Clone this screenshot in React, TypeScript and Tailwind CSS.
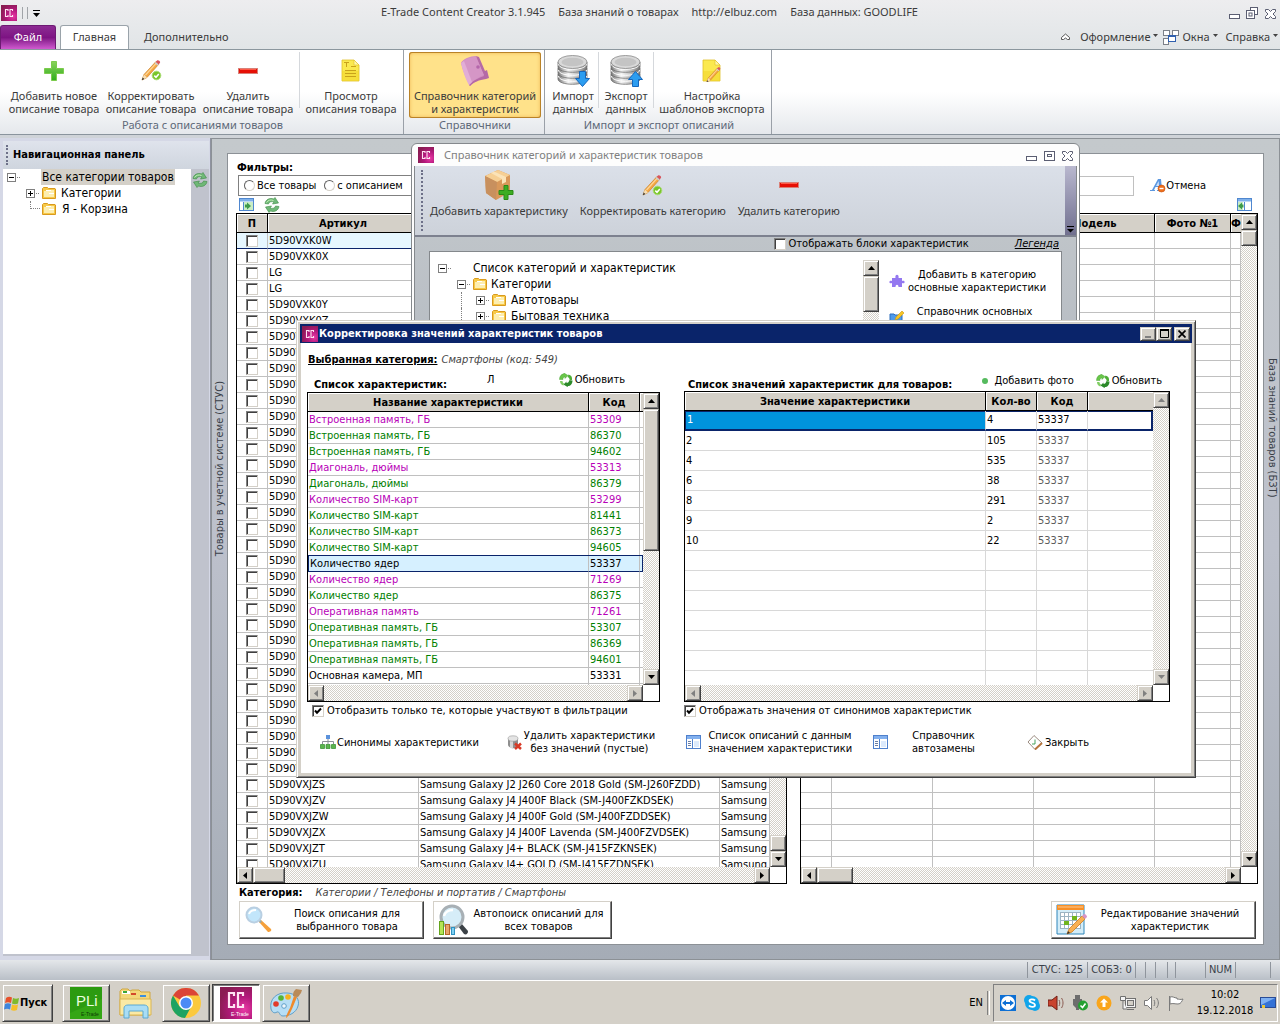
import type { ReactNode } from "react";

const raised =
  "border border-t-[#d4d0c8] border-l-[#d4d0c8] border-b-[#404040] border-r-[#404040] bg-[#d4d0c8] shadow-[inset_1px_1px_0_#fff,inset_-1px_-1px_0_#808080]";
const checker =
  "bg-[repeating-conic-gradient(#d4d0c8_0_25%,#ffffff_0_50%)] bg-[length:2px_2px]";
const segoe = "[font-family:'Noto_Sans','Open_Sans',sans-serif]";

/* ---------- icons ---------- */

function Folder() {
  return (
    <svg width="14" height="12" viewBox="0 0 14 12" className="shrink-0">
      <path d="M.5 11.5V1.5L1.5.5h4l1 1h6.5l.5.5v9.500z" fill="#f7c948" stroke="#d99a1e" />
      <path d="M2 10V4h4l1-1h5v7z" fill="#fdeeb0" />
      <path d="M4 3.500h5M7 6.500h5" stroke="#fff" />
    </svg>
  );
}

function Plus() {
  return (
    <svg width="20" height="20" viewBox="0 0 20 20">
      <defs>
        <linearGradient id="plusG" x2="0" y2="1">
          <stop offset="0" stopColor="#8ad25c" />
          <stop offset="1" stopColor="#2fae1c" />
        </linearGradient>
      </defs>
      <path d="M7.500.5h5v7h7v5h-7v7h-5v-7h-7v-5h7z" fill="url(#plusG)" stroke="#7ccb4d" />
    </svg>
  );
}

function Minus() {
  return (
    <svg width="20" height="6" viewBox="0 0 20 6">
      <rect x=".5" y=".5" width="19" height="5" fill="#e60f05" stroke="#d98078" />
      <path d="M2 1.500h16" stroke="#ff5a48" />
    </svg>
  );
}

function PencilShape() {
  return (
    <g>
      <path d="M1 20l2-5.500L15 1.500l3 2.500L6 17.500z" fill="#f5a742" stroke="#c9812b" strokeWidth=".7" />
      <path d="M4 14.500L15 2.500l1 .8L5 15.500z" fill="#fdd596" />
      <path d="M1 20l2-5.500 3 3z" fill="#f6dfb5" />
      <path d="M.8 20.200l.9-2.600 1.600 1.500z" fill="#333" />
      <path d="M14.700 2L16 .6c.7-.6 1.500-.4 2.200.2s1.300 1.400.7 2.200L17.600 4.500z" fill="#d9545c" />
      <path d="M13.700 3.100l1-1.100 3 2.500-1 1.200z" fill="#c9ced6" />
    </g>
  );
}

function Pencil() {
  return (
    <svg width="21" height="21" viewBox="0 0 21 21">
      <PencilShape />
      <circle cx="15.500" cy="15.500" r="4.300" fill="#79c52a" stroke="#a9dc74" />
      <path d="M13.300 15.600l1.700 1.700 2.800-3.300" fill="none" stroke="#fff" strokeWidth="1.500" />
    </svg>
  );
}

function Note({ pencil = false }: { pencil?: boolean }) {
  return (
    <svg width="20" height="23" viewBox="0 0 20 23">
      <path d="M1 1h12l5 5v16H1z" fill="#fbe94f" stroke="#e0c02a" strokeWidth=".8" />
      <path d="M1 12h17v10H1z" fill="#f2d428" opacity=".5" />
      <path d="M13 1v5h5z" fill="#fff7a8" stroke="#e0c02a" strokeWidth=".6" />
      {pencil ? (
        <g transform="translate(4 8) scale(.75)">
          <PencilShape />
        </g>
      ) : (
        <path d="M3 3.500h5M5.500 3.500V8M10 7.500h5M4 11.500h11M4 14.500h11M4 17.500h11" stroke="#c9a21a" fill="none" />
      )}
    </svg>
  );
}

function Book() {
  return (
    <svg width="30" height="32" viewBox="0 0 30 32">
      <path d="M1 8C3 4 10 1 16 1l8 15 2 6C19 24 14 27 10 31 7 25 3 17 1 8z" fill="#d08cc0" />
      <path d="M16 1l3 1 6 14 2-1 2 8-3 1C19 25 14 27 10 31l-1-1C13 25 19 23 24 21z" fill="#b56aa6" />
      <path d="M16 2l8 18c-5 2-9 4-14 9L1.500 8C4 4 11 2 16 2z" fill="#d596c6" />
      <path d="M1 8l3-2 8 21-3 3C6 25 3 17 1 8z" fill="#e2aed7" />
      <circle cx="18" cy="12" r="1.800" fill="#b566ab" />
    </svg>
  );
}

function Db({ up = false }: { up?: boolean }) {
  return (
    <svg width="33" height="33" viewBox="0 0 33 33">
      <defs>
        <linearGradient id="dbG">
          <stop offset="0" stopColor="#777" />
          <stop offset=".35" stopColor="#f4f4f4" />
          <stop offset=".7" stopColor="#bbb" />
          <stop offset="1" stopColor="#777" />
        </linearGradient>
      </defs>
      {[20, 14, 8].map((y) => (
        <g key={y}>
          <path d={`M1 ${y}v5c0 7 29 7 29 0v-5z`} fill="url(#dbG)" stroke="#6d6d6d" strokeWidth=".8" />
          <path d={`M1.500 ${y + 2}c0 7 28 7 28 0`} fill="none" stroke="#fff" />
        </g>
      ))}
      <ellipse cx="15.500" cy="8" rx="14.500" ry="6.500" fill="#d9d9d9" stroke="#888" strokeWidth=".8" />
      <ellipse cx="15.500" cy="8" rx="11" ry="4.300" fill="#c4c4c4" />
      {up ? (
        <path d="M25.500 17.500l7 8h-4v7h-6v-7h-4z" fill="#2c9df0" stroke="#1467bd" />
      ) : (
        <path d="M25.500 32.500l-7-8h4v-7h6v7h4z" fill="#2c9df0" stroke="#1467bd" />
      )}
    </svg>
  );
}

function Box() {
  return (
    <svg width="30" height="32" viewBox="0 0 30 32">
      <path d="M1 7L14 1l12 5v17L12 31 2 24z" fill="#d9985a" />
      <path d="M1 7L14 1l12 5-13 7z" fill="#f6cf94" />
      <path d="M1 7l12 6-1 18L2 24z" fill="#c8905e" />
      <path d="M7 4l3-1.500L22 8v5l-4 2v-5z" fill="#fbe3b8" />
      <path d="M20 16.500h4v5h5v4h-5v5h-4v-5h-5v-4h5z" fill="#3cad22" stroke="#2a8a17" />
    </svg>
  );
}

function Refresh() {
  return (
    <svg width="16" height="16" viewBox="0 0 16 16" className="shrink-0">
      <path d="M1 6.500C1.500 2.500 6 .5 9.500 2L11 .5 14.500 6 8.500 7 10 5C7.500 4 4.500 5 4.500 7z" fill="#6fb877" stroke="#3c8a45" strokeWidth=".6" />
      <path d="M15 9.500c-.5 4-5 6-8.500 4.500L5 15.500 1.500 10l6-1L6 11c2.500 1 5.500 0 5.500-2z" fill="#6fb877" stroke="#3c8a45" strokeWidth=".6" />
      <path d="M2.500 5.500C4 3 7 2.500 9.500 3.500" stroke="#c2efb4" fill="none" />
    </svg>
  );
}

function RefreshSmall() {
  return (
    <svg width="14" height="14" viewBox="0 0 14 14" className="shrink-0">
      <path d="M.5 6.500C.5 3 2.500 1 4.500 1L5 0l4 2.500L6 5.500V4C4.500 4 3.800 5 4 6.500z" fill="#69c64a" stroke="#3f9c2c" strokeWidth=".4" />
      <path d="M9.500 1.500c2.500.5 4 2.500 3.500 5.500l-2.500 1C11 6 10 4.500 8.500 4z" fill="#4fae38" />
      <path d="M13.500 7.500c0 3.500-2 5.500-4.500 5.500l-.5 1-4-2.500 3-3V10c1.500 0 2.700-1 2.500-2.500z" fill="#2c8a2a" />
      <path d="M1 8c0 2.500 1.500 4 3.500 4.500l.5-2C4 10 3.500 9 3.500 8z" fill="#7fce62" />
    </svg>
  );
}

function CC({ size = 16, label = false }: { size?: number; label?: boolean }) {
  return (
    <svg width={size} height={size} viewBox="0 0 32 32" className="shrink-0">
      <defs>
        <radialGradient id="ccG" cx=".75" cy=".7" r=".8">
          <stop offset="0" stopColor="#e83aa4" />
          <stop offset=".5" stopColor="#b3187c" />
          <stop offset="1" stopColor="#8a1c52" />
        </radialGradient>
      </defs>
      <rect width="32" height="32" fill="url(#ccG)" />
      <g transform={label ? "translate(0 -3)" : undefined} fill="none" stroke="#ffe3f2" strokeWidth="2.200">
        <path d="M14 12V9H9v14h5v-3" />
        <path d="M23 12V9h-5v14h5v-3" />
      </g>
      {label && (
        <text x="11" y="29" fontSize="5" fill="#fff" fontFamily="Liberation Sans">
          E-Trade
        </text>
      )}
    </svg>
  );
}

function PanelIcon({ flip = false }: { flip?: boolean }) {
  return (
    <svg width="15" height="13" viewBox="0 0 15 13" className="shrink-0">
      <rect x=".5" y=".5" width="14" height="12" fill="#fff" stroke="#4f87cf" />
      <rect x="1" y="1" width="13" height="2.500" fill="#7fb0ea" />
      {flip ? (
        <g>
          <rect x="1" y="4" width="5" height="8" fill="#c9edc4" />
          <path d="M7.500 4v8" stroke="#4f87cf" />
          <path d="M1 8l4-3.500v2h1.500v3H5v2z" fill="#3e9b4b" />
        </g>
      ) : (
        <g>
          <rect x="5" y="4" width="9" height="8" fill="#c9edc4" />
          <path d="M4.500 4v8" stroke="#4f87cf" />
          <path d="M12 8L8 4.500v2H6v3h2v2z" fill="#3e9b4b" />
        </g>
      )}
    </svg>
  );
}

function ListIcon() {
  return (
    <svg width="16" height="14" viewBox="0 0 16 14" className="shrink-0">
      <rect x=".5" y=".5" width="14" height="13" fill="#fff" stroke="#4f80cc" />
      <rect x="1" y="1" width="13" height="3" fill="#82b0ee" />
      <path d="M6.500 4v9" stroke="#4f80cc" />
      <path d="M2 6.500h3M2 8.500h3M2 10.500h3" stroke="#6b7fa5" />
      <rect x="8" y="6" width="5" height="6" fill="#dceafc" />
    </svg>
  );
}

function WinButtons({ restore = false }: { restore?: boolean }) {
  return (
    <svg width="48" height="14" viewBox="0 0 48 14" fill="#fff" stroke="#5b5e72">
      <rect x="1.500" y="8.500" width="10" height="4" />
      {restore ? (
        <g>
          <rect x="22.500" y="1.500" width="7" height="7" />
          <rect x="18.500" y="4.500" width="8" height="8" />
          <rect x="21" y="7" width="3" height="3" />
        </g>
      ) : (
        <g>
          <rect x="19.500" y="3.500" width="10" height="9" />
          <rect x="22.500" y="6.500" width="4" height="2" />
        </g>
      )}
      <path d="M37.500 3.500h3l2 2 2-2h3v2l-2.500 2.500 2.500 2.500v2h-3l-2-2-2 2h-3v-2L40 8l-2.500-2.500z" />
    </svg>
  );
}

/* ---------- small controls ---------- */

type Dir = "up" | "down" | "left" | "right";
const arrowPath: Record<Dir, string> = {
  up: "M0 4h7L3.500 0z",
  down: "M0 0h7L3.500 4z",
  left: "M4 0v7L0 3.500z",
  right: "M0 0v7l4-3.500z",
};

function ScrollButton({ dir, off }: { dir: Dir; off?: boolean }) {
  const flat = dir === "up" || dir === "down";
  return (
    <button aria-label={dir} className={`flex size-4 shrink-0 items-center justify-center ${raised}`}>
      <svg width={flat ? 7 : 4} height={flat ? 4 : 7}>
        <path d={arrowPath[dir]} fill={off ? "#808080" : "#000"} />
      </svg>
    </button>
  );
}

function VScroll({ children, off }: { children?: ReactNode; off?: boolean }) {
  return (
    <div className={`flex w-4 shrink-0 flex-col ${checker}`}>
      <ScrollButton dir="up" off={off} />
      <div className="flex min-h-0 flex-1 flex-col">{children}</div>
      <ScrollButton dir="down" off={off} />
    </div>
  );
}

function HScroll({ thumb, off }: { thumb?: string; off?: boolean }) {
  return (
    <div className="flex h-4 shrink-0 bg-white pr-4">
      <div className={`flex flex-1 ${checker}`}>
        <ScrollButton dir="left" off={off} />
        <div className="flex flex-1">{thumb && <div className={`${thumb} ${raised}`} />}</div>
        <ScrollButton dir="right" off={off} />
      </div>
    </div>
  );
}

function Check({ checked = false, id, label }: { checked?: boolean; id?: string; label?: string }) {
  return (
    <span className="relative inline-block size-3 shrink-0">
      <input
        id={id}
        type="checkbox"
        aria-label={label}
        defaultChecked={checked}
        className="block size-3 appearance-none border border-t-[#808080] border-l-[#808080] border-r-[#d4d0c8] border-b-[#d4d0c8] bg-white shadow-[inset_1px_1px_0_#404040]"
      />
      {checked && (
        <svg width="8" height="8" viewBox="0 0 8 8" className="pointer-events-none absolute top-[2px] left-[2px]">
          <path d="M1 3.500l2 2.200L7 1.500" fill="none" stroke="#000" strokeWidth="2" />
        </svg>
      )}
    </span>
  );
}

function Radio({ label }: { label: string }) {
  return (
    <label className="flex shrink-0 items-center gap-[2px]">
      <input
        type="radio"
        name="filter"
        className="size-[11px] appearance-none rounded-full border border-t-[#606060] border-l-[#606060] border-r-[#d4d0c8] border-b-[#d4d0c8] bg-white"
      />
      {label}
    </label>
  );
}

function Expander({ open = false }: { open?: boolean }) {
  return (
    <svg width="14" height="9" viewBox="0 0 14 9" className="shrink-0">
      <rect x=".5" y=".5" width="8" height="8" fill="#fff" stroke="#808080" />
      <path d={open ? "M2 4.500h5" : "M2 4.500h5M4.500 2v5"} stroke="#000" />
      <path d="M10 4.500h4" stroke="#808080" strokeDasharray="1 1" />
    </svg>
  );
}

function Th({ children, className = "border-r" }: { children?: ReactNode; className?: string }) {
  return (
    <th
      className={`h-[19px] overflow-hidden border-b border-black bg-[#d4d0c8] p-0 pt-[2px] text-center font-bold whitespace-nowrap shadow-[inset_1px_1px_0_#fff] ${className}`}
    >
      {children}
    </th>
  );
}

/* ---------- ribbon ---------- */

function RibbonButton({ icon, lines, className }: { icon: ReactNode; lines: string[]; className: string }) {
  return (
    <button className={`flex h-[66px] shrink-0 flex-col items-center text-center leading-[13px] ${className}`}>
      <span className="flex h-[37px] items-center justify-center">{icon}</span>
      {lines.map((l) => (
        <span key={l} className="whitespace-nowrap">
          {l}
        </span>
      ))}
    </button>
  );
}

function RibbonGroup({ title, children }: { title: string; children: ReactNode }) {
  return (
    <section className="flex flex-col border-r border-[#9aa0a8] pt-[2px] pr-px pl-[3px]">
      <div className="flex">{children}</div>
      <h2 className="text-center leading-[14px] text-[#5d6878]">{title}</h2>
    </section>
  );
}

const Sep = () => <div className="h-14 w-px shrink-0 bg-[#d5d8dc]" />;

function Ribbon() {
  return (
    <div className={`flex h-[86px] shrink-0 border-t border-b border-t-[#8b979e] border-b-[#8a949d] bg-linear-to-b from-white via-white to-[#e5e8ec] text-[11px] text-[#3b3b3b] ${segoe}`}>
      <RibbonGroup title="Работа с описаниями товаров">
        <RibbonButton className="w-[102px]" icon={<Plus />} lines={["Добавить новое", "описание товара"]} />
        <RibbonButton className="w-[92px]" icon={<Pencil />} lines={["Корректировать", "описание товара"]} />
        <RibbonButton className="w-[102px]" icon={<Minus />} lines={["Удалить", "описание товара"]} />
        <Sep />
        <RibbonButton className="w-[102px]" icon={<Note />} lines={["Просмотр", "описания товара"]} />
      </RibbonGroup>
      <RibbonGroup title="Справочники">
        <RibbonButton
          className="mx-[2px] w-[132px] rounded-[3px] bg-[#ffe28a] shadow-[inset_0_0_0_1px_#b98228,inset_0_0_4px_#e8a33c]"
          icon={<Book />}
          lines={["Справочник категорий", "и характеристик"]}
        />
      </RibbonGroup>
      <RibbonGroup title="Импорт и экспорт описаний">
        <RibbonButton className="w-[50px]" icon={<Db />} lines={["Импорт", "данных"]} />
        <Sep />
        <RibbonButton className="w-[54px]" icon={<Db up />} lines={["Экспорт", "данных"]} />
        <Sep />
        <RibbonButton className="w-[116px]" icon={<Note pencil />} lines={["Настройка", "шаблонов экспорта"]} />
      </RibbonGroup>
    </div>
  );
}

const Caret = () => (
  <svg width="5" height="3" className="mb-1 ml-[3px]">
    <path d="M0 0h5L2.500 3z" fill="#444" />
  </svg>
);

function TopBars() {
  return (
    <header className={`shrink-0 bg-linear-to-b from-[#ededef] to-[#e1e5e7] text-[11px] text-[#3b3b3b] ${segoe}`}>
      <div className="flex h-[25px] items-center pr-1 pl-px">
        <CC />
        <svg width="22" height="14" className="ml-[5px]">
          <path d="M.5 1v12M5.500 1v12" stroke="#a0a4a8" />
          <path d="M11 4.500h7" stroke="#000" />
          <path d="M11 7h7l-3.500 4z" fill="#000" />
        </svg>
        <div className="flex flex-1 justify-center gap-[13px] pb-px pl-[27px] whitespace-nowrap">
          <span>E-Trade Content Creator 3.1.945</span>
          <span>База знаний о товарах</span>
          <span>http://elbuz.com</span>
          <span>База данных: GOODLIFE</span>
        </div>
        <WinButtons restore />
      </div>
      <nav className="flex h-6 items-end">
        <button className="h-6 w-14 rounded-t-[3px] border border-b-0 border-[#6d1a73] bg-linear-to-b from-[#8d2b93] via-[#7d1383] to-[#d05ad0] pb-[2px] text-white">
          Файл
        </button>
        <button className="ml-1 h-6 w-[69px] rounded-t-[3px] border border-b-0 border-[#9aa3aa] bg-white pb-[2px]">Главная</button>
        <button className="ml-[15px] h-6">Дополнительно</button>
        <div className="ml-auto flex h-6 items-center">
          <svg width="9" height="8" className="mr-[10px]">
            <path d="M.5 4.500L4.500 1l4 3.500v2H6.500L4.500 5l-2 1.500h-2z" fill="#fff" stroke="#555" />
          </svg>
          <button className="flex items-center">
            Оформление
            <Caret />
          </button>
          <svg width="16" height="15" className="mr-[3px] ml-[5px]" fill="#fff" stroke="#7b8088">
            <rect x=".5" y=".5" width="6" height="5" />
            <rect x="9.500" y=".5" width="6" height="5" />
            <rect x=".5" y="8.500" width="5" height="6" />
            <rect x="5.500" y="5.500" width="7" height="6" stroke="#2f5fae" />
            <path d="M5 6h8" stroke="#2f5fae" strokeWidth="2" />
          </svg>
          <button className="flex items-center">
            Окна
            <Caret />
          </button>
          <button className="ml-2 flex items-center pr-[2px]">
            Справка
            <Caret />
          </button>
        </div>
      </nav>
    </header>
  );
}

/* ---------- navigation panel ---------- */

function NavPanel() {
  return (
    <aside className="flex w-[211px] shrink-0 flex-col border-r border-[#8f93a0] bg-[#d5d8e6] pt-[3px] pr-px pb-1 pl-[3px]">
      <div className="flex h-7 shrink-0 items-center gap-[5px] bg-linear-to-b from-[#dfe3ec] to-[#cfd5de] pl-[3px]">
        <div className="h-5 border-l-2 border-dotted border-[#6d7088]" />
        <h2 className="font-bold">Навигационная панель</h2>
      </div>
      <div className="flex flex-1 border-b-2 border-[#c0c3cd]">
        <ul className="flex-1 bg-white pl-1 text-xs">
          <li className="flex h-4 items-center">
            <Expander open />
            <span className="ml-5 flex h-4 items-center bg-[#d4d0c8] px-px whitespace-nowrap">Все категории товаров</span>
          </li>
          <li className="ml-[19px] flex h-4 items-center">
            <Expander />
            <span className="ml-[2px]">
              <Folder />
            </span>
            <span className="ml-[5px]">Категории</span>
          </li>
          <li className="ml-[23px] flex h-4 items-center">
            <span className="mr-[2px] h-4 w-[10px]">
              <span className="block h-2 border-b border-l border-dotted border-[#808080]" />
            </span>
            <Folder />
            <span className="ml-[6px]">Я - Корзина</span>
          </li>
        </ul>
        <div className="w-[18px] bg-[#c0c3cd] pt-[3px] pl-px">
          <button aria-label="Обновить дерево">
            <Refresh />
          </button>
        </div>
      </div>
    </aside>
  );
}

/* ---------- main document ---------- */

const products: string[][] = [
  ["5D90VXK0W"],
  ["5D90VXK0X"],
  ["LG"],
  ["LG"],
  ["5D90VXK0Y"],
  ["5D90VXK0Z"],
  ...Array.from({ length: 28 }, () => ["5D90VX"]),
  ["5D90VXJZS", "Samsung Galaxy J2 J260 Core 2018 Gold (SM-J260FZDD)", "Samsung"],
  ["5D90VXJZV", "Samsung Galaxy J4 J400F Black (SM-J400FZKDSEK)", "Samsung"],
  ["5D90VXJZW", "Samsung Galaxy J4 J400F Gold (SM-J400FZDDSEK)", "Samsung"],
  ["5D90VXJZX", "Samsung Galaxy J4 J400F Lavenda (SM-J400FZVDSEK)", "Samsung"],
  ["5D90VXJZT", "Samsung Galaxy J4+ BLACK (SM-J415FZKNSEK)", "Samsung"],
  ["5D90VXJZU", "Samsung Galaxy J4+ GOLD (SM-J415FZDNSEK)", "Samsung"],
];

const cell = "h-4 overflow-hidden border-r border-b border-[#c0c0c0] p-0 pl-px leading-[15px] whitespace-nowrap";

function ProductGrid() {
  return (
    <div className="flex w-[551px] shrink-0 flex-col border border-black">
      <div className="flex min-h-0 flex-1">
        <div className="min-w-0 flex-1 overflow-hidden">
          <table className="w-full table-fixed border-separate border-spacing-0">
            <colgroup>
              <col className="w-[31px]" />
              <col className="w-[151px]" />
              <col className="w-[301px]" />
              <col />
            </colgroup>
            <thead>
              <tr>
                <Th>П</Th>
                <Th>Артикул</Th>
                <Th />
                <Th />
              </tr>
            </thead>
            <tbody>
              {products.map((p, i) => {
                const extra = i === 0 ? "bg-[#e6f7ff] border-b-[#0a246a]" : "";
                return (
                  <tr key={i}>
                    <td className={`${cell} ${extra}`}>
                      <span className="flex justify-center pr-[2px]">
                        <Check label={p[0]} />
                      </span>
                    </td>
                    <td className={`${cell} ${extra}`}>{p[0]}</td>
                    <td className={`${cell} ${extra}`}>{p[1]}</td>
                    <td className={`${cell} ${extra}`}>{p[2]}</td>
                  </tr>
                );
              })}
            </tbody>
          </table>
        </div>
        <VScroll>
          <div className="flex-1" />
          <div className={`h-4 ${raised}`} />
        </VScroll>
      </div>
      <HScroll thumb="w-8" />
    </div>
  );
}

function PhotoGrid() {
  return (
    <div className="flex min-w-0 flex-1 flex-col border border-black">
      <div className="flex min-h-0 flex-1">
        <div className="min-w-0 flex-1 overflow-hidden">
          <table className="w-full table-fixed border-separate border-spacing-0">
            <colgroup>
              <col className="w-[31px]" />
              <col className="w-[101px]" />
              <col className="w-[101px]" />
              <col className="w-[121px]" />
              <col className="w-[76px]" />
              <col />
            </colgroup>
            <thead>
              <tr>
                <Th />
                <Th />
                <Th />
                <Th>Модель</Th>
                <Th>Фото №1</Th>
                <Th className="border-r-0">Ф</Th>
              </tr>
            </thead>
            <tbody>
              {Array.from({ length: 40 }, (_, i) => (
                <tr key={i}>
                  {Array.from({ length: 6 }, (_, j) => (
                    <td key={j} className={cell} />
                  ))}
                </tr>
              ))}
            </tbody>
          </table>
        </div>
        <VScroll>
          <div className={`h-4 ${raised}`} />
        </VScroll>
      </div>
      <HScroll thumb="w-9" />
    </div>
  );
}

function BigButton({ icon, lines, className }: { icon: ReactNode; lines: string[]; className: string }) {
  return (
    <button
      className={`flex h-[38px] shrink-0 items-center border border-t-[#d4d0c8] border-l-[#d4d0c8] border-r-[#404040] border-b-[#404040] bg-white pl-1 leading-[13px] shadow-[inset_-1px_-1px_0_#808080] ${className}`}
    >
      {icon}
      <span className="flex-1 pr-[3px] text-center whitespace-nowrap">
        {lines[0]}
        <br />
        {lines[1]}
      </span>
    </button>
  );
}

function MainDocument() {
  return (
    <main className="flex min-w-0 flex-1 border border-[#8c9196] bg-linear-to-b from-[#c4c9cc] via-[#bcc0cb] to-[#a5acb6] text-[#3a3f48]">
      <div className="flex w-[15px] shrink-0 justify-center pt-[242px]">
        <span className="h-max rotate-180 [writing-mode:vertical-rl]">Товары в учетной системе (СТУС)</span>
      </div>
      <div className="my-[14px] flex min-w-0 flex-1 flex-col border border-[#8c9196] bg-white pt-[6px] pr-[5px] pb-[5px] pl-2 text-black">
        <h2 className="ml-px shrink-0 pt-px leading-[14px] font-bold">Фильтры:</h2>
        <div className="flex h-[21px] shrink-0 items-center">
          <div className="ml-[2px] flex h-[21px] w-[300px] items-center gap-2 border border-[#808080] pl-[5px]">
            <Radio label="Все товары" />
            <Radio label="с описанием" />
            <Radio label="без описания" />
          </div>
          <div className="flex flex-1 items-center justify-end">
            <input aria-label="Поиск" className="h-5 w-[200px] border border-[#c0c0c0] bg-white" />
            <button className="mr-[52px] ml-4 flex items-center">
              <svg width="16" height="15" viewBox="0 0 16 15">
                <path d="M0 12h2L8 1h3l1 11h1v1H7v-1h2V9H5.500L4 12h1v1H0z" fill="#5b97e0" />
                <path d="M6 8h3l-.3-5z" fill="#cfe2fa" />
                <circle cx="11.500" cy="10.500" r="3.500" fill="#ef6f1c" stroke="#c44c08" strokeWidth=".6" />
                <path d="M9.500 10.500h4" stroke="#fff" strokeWidth="1.400" />
              </svg>
              Отмена
            </button>
          </div>
        </div>
        <div className="flex h-[17px] shrink-0 items-center gap-[10px] pr-[6px] pl-[3px]">
          <button aria-label="Показать панель">
            <PanelIcon />
          </button>
          <button aria-label="Обновить">
            <Refresh />
          </button>
          <button aria-label="Скрыть панель" className="ml-auto">
            <PanelIcon flip />
          </button>
        </div>
        <div className="flex min-h-0 flex-1 gap-[13px]">
          <ProductGrid />
          <PhotoGrid />
        </div>
        <p className="flex h-[17px] shrink-0 items-center gap-[13px] pl-[3px]">
          <b>Категория:</b>
          <i className="text-[#444]">Категории / Телефоны и портатив / Смартфоны</i>
        </p>
        <div className="flex shrink-0 gap-[9px] pr-[2px] pl-[3px]">
          <BigButton
            className="w-[185px]"
            lines={["Поиск описания для", "выбранного товара"]}
            icon={
              <svg width="30" height="30" viewBox="0 0 30 30">
                <path d="M15 17l2-2 10 9c1 2-1 3-3 3z" fill="#f5a03a" />
                <path d="M14 15l2-1 2 3-2 1z" fill="#9aa" />
                <circle cx="10" cy="10" r="7.500" fill="#c2e6fb" stroke="#b9cfe2" strokeWidth="2" />
                <path d="M5 9c1-3 4-4 7-4" stroke="#fff" strokeWidth="2" fill="none" />
              </svg>
            }
          />
          <BigButton
            className="w-[179px]"
            lines={["Автопоиск описаний для", "всех товаров"]}
            icon={
              <svg width="31" height="32" viewBox="0 0 31 32">
                <path d="M20 22l3-3 7 8c0 3-2 4-4 3z" fill="#3c4247" />
                <circle cx="14" cy="13" r="11" fill="#d6edf8" stroke="#a8b0b5" strokeWidth="3" />
                <path d="M6 12c1-4 5-6 9-6" stroke="#fff" strokeWidth="2.500" fill="none" />
                <rect x="1.500" y="17.500" width="4" height="13" fill="#b5e455" stroke="#64a51c" />
                <rect x="7.500" y="20.500" width="4" height="10" fill="#e8a46b" stroke="#b5652a" />
                <rect x="13.500" y="23.500" width="3" height="7" fill="#7fd0f2" stroke="#2f92c2" />
              </svg>
            }
          />
          <BigButton
            className="ml-auto w-[205px]"
            lines={["Редактирование значений", "характеристик"]}
            icon={
              <svg width="32" height="32" viewBox="0 0 32 32">
                <path d="M1 1h27v29H1z" fill="#d4edf8" stroke="#2f86ba" />
                <rect x="1" y="1" width="27" height="5" fill="#f79028" />
                <path d="M2 3h25" stroke="#ffc98d" />
                <rect x="4" y="8" width="21" height="17" fill="#fff" />
                <path d="M4.500 8v17M8.500 8v17M12.500 8v17M16.500 8v17M20.500 8v17M24.500 8v17M4 8.500h21M4 12.500h21M4 16.500h21M4 20.500h21M4 24.500h21" stroke="#9db4c2" />
                <path d="M8 17h5v4H8zM16 12h5v4h-5z" fill="#71b51c" />
                <path d="M11 30l2-5L26 12l3 3-13 13z" fill="#f8b054" stroke="#cf7d1d" strokeWidth=".8" />
                <path d="M26 12l2-2c2 0 3 2 3 3l-2 2z" fill="#d893c4" />
                <path d="M11 30l1-3 2 2z" fill="#333" />
              </svg>
            }
          />
        </div>
      </div>
      <div className="flex w-[15px] shrink-0 justify-center pt-[219px]">
        <span className="h-max [writing-mode:vertical-rl]">База знаний товаров (БЗТ)</span>
      </div>
    </main>
  );
}

/* ---------- category window ---------- */

function ToolButton({ icon, label }: { icon: ReactNode; label: string }) {
  return (
    <button className="flex flex-col items-center">
      <span className="flex h-9 items-center">{icon}</span>
      <span className="leading-[15px] whitespace-nowrap">{label}</span>
    </button>
  );
}

function CategoryWindow() {
  return (
    <section className="absolute top-[143px] left-[411px] flex h-[400px] w-[669px] flex-col rounded-t-[6px] border border-[#84888c] bg-[#fdfdfd]">
      <div className={`flex h-[22px] shrink-0 items-center pr-[6px] pl-[6px] text-[11px] text-[#808080] ${segoe}`}>
        <CC />
        <span className="ml-[10px] flex-1">Справочник категорий и характеристик товаров</span>
        <WinButtons />
      </div>
      <div className="mx-[2px] flex flex-1 flex-col border-x border-[#84888c] bg-linear-to-b from-[#c4c9cc] to-[#aab0bb]">
        <div className={`flex h-[71px] shrink-0 border-b-2 border-[#7d818f] bg-linear-to-b from-[#dbe0e9] to-[#cdd2da] text-[11px] text-[#3b3b3b] ${segoe}`}>
          <div className="my-1 ml-[6px] w-[9px] border-l-2 border-dotted border-[#6d7088]" />
          <div className="flex flex-1 items-start gap-3 pt-px">
            <ToolButton icon={<Box />} label="Добавить характеристику" />
            <ToolButton icon={<Pencil />} label="Корректировать категорию" />
            <ToolButton icon={<Minus />} label="Удалить категорию" />
          </div>
          <div className="flex w-[11px] items-end justify-center bg-linear-to-b from-[#b9b8cf] to-[#71708f] pb-[2px]">
            <svg width="7" height="7">
              <path d="M0 .5h7" stroke="#000" />
              <path d="M0 3h7L3.500 6.500z" fill="#000" />
            </svg>
          </div>
        </div>
        <div className="flex h-[14px] shrink-0 items-center justify-end pr-[17px]">
          <span className="flex items-center gap-[3px]">
            <Check id="blocks" />
            <label htmlFor="blocks">Отображать блоки характеристик</label>
          </span>
          <a href="#legend" className="ml-[46px] italic underline">
            Легенда
          </a>
        </div>
        <div className="mx-[14px] flex flex-1 border border-[#84888c] bg-white pt-2">
          <ul className="flex-1 pl-2 text-xs">
            <li className="flex h-4 items-center">
              <Expander open />
              <span className="ml-[21px]">Список категорий и характеристик</span>
            </li>
            <li className="ml-[19px] flex h-4 items-center">
              <Expander open />
              <span className="ml-[2px]">
                <Folder />
              </span>
              <span className="ml-1">Категории</span>
            </li>
            {["Автотовары", "Бытовая техника"].map((t) => (
              <li key={t} className="ml-[23px] flex h-4 items-center border-l border-dotted border-[#808080] pl-[14px]">
                <Expander />
                <span className="ml-[2px]">
                  <Folder />
                </span>
                <span className="ml-[5px]">{t}</span>
              </li>
            ))}
          </ul>
          <VScroll>
            <div className={`h-9 ${raised}`} />
          </VScroll>
          <div className="flex w-[182px] flex-col gap-[11px] pt-[8px] pl-[10px] text-center leading-[13px]">
            <button className="flex items-center gap-[3px]">
              <svg width="16" height="14" viewBox="0 0 16 14" className="shrink-0">
                <path d="M3 4h3.500C5.500-.5 10.500-.5 9.500 4H13v3c3.500-1.500 3.500 3.500 0 2v4H9.500c0-3-3-3-3 0H3V9C-.5 10.500-.5 5.500 3 7z" fill="#9478f0" />
              </svg>
              <span className="whitespace-nowrap">
                Добавить в категорию
                <br />
                основные характеристики
              </span>
            </button>
            <button className="flex items-center gap-[3px]">
              <svg width="16" height="14" viewBox="0 0 16 14" className="shrink-0">
                <path d="M1 12V3h4l1 1h7v8z" fill="#4f9bea" stroke="#2e6fbd" />
                <path d="M6 9l1-3 6-6 2 2-6 6z" fill="#f7c524" stroke="#c99512" strokeWidth=".6" />
              </svg>
              <span className="flex-1 pr-5 whitespace-nowrap">
                Справочник основных
                <br />
                характеристик
              </span>
            </button>
          </div>
        </div>
      </div>
    </section>
  );
}

/* ---------- dialog ---------- */

const P = "text-[#b800b8]";
const G = "text-[#008000]";
const features: [string, string, string][] = [
  ["Встроенная память, ГБ", "53309", P],
  ["Встроенная память, ГБ", "86370", G],
  ["Встроенная память, ГБ", "94602", G],
  ["Диагональ, дюймы", "53313", P],
  ["Диагональ, дюймы", "86379", G],
  ["Количество SIM-карт", "53299", P],
  ["Количество SIM-карт", "81441", G],
  ["Количество SIM-карт", "86373", G],
  ["Количество SIM-карт", "94605", G],
  ["Количество ядер", "53337", "text-black"],
  ["Количество ядер", "71269", P],
  ["Количество ядер", "86375", G],
  ["Оперативная память", "71261", P],
  ["Оперативная память, ГБ", "53307", G],
  ["Оперативная память, ГБ", "86369", G],
  ["Оперативная память, ГБ", "94601", G],
  ["Основная камера, МП", "53331", "text-black"],
  ["", "", ""],
];

const values: [string, string][] = [
  ["1", "4"],
  ["2", "105"],
  ["4", "535"],
  ["6", "38"],
  ["8", "291"],
  ["9", "2"],
  ["10", "22"],
];

function FeatureGrid() {
  return (
    <div className="flex h-[310px] flex-col border border-black">
      <div className="flex min-h-0 flex-1">
        <div className="min-w-0 flex-1 overflow-hidden">
          <table className="w-full table-fixed border-separate border-spacing-0">
            <colgroup>
              <col />
              <col className="w-[51px]" />
              <col className="w-[3px]" />
            </colgroup>
            <thead>
              <tr>
                <Th>Название характеристики</Th>
                <Th>Код</Th>
                <Th className="border-r-0" />
              </tr>
            </thead>
            <tbody>
              {features.map(([name, code, color], i) => {
                const on = i === 9;
                const sel = on ? "bg-[#d6f0ff] border-b-[#0a246a] shadow-[0_-1px_0_#0a246a]" : "";
                return (
                  <tr key={i}>
                    <td className={`${cell} ${color} ${sel} ${on ? "border-l border-l-[#0a246a] pl-0" : ""}`}>{name}</td>
                    <td className={`${cell} ${color} ${sel}`}>{code}</td>
                    <td className={`h-4 border-b border-[#c0c0c0] p-0 ${sel} ${on ? "border-r border-r-[#0a246a]" : ""}`} />
                  </tr>
                );
              })}
            </tbody>
          </table>
        </div>
        <VScroll>
          <div className={`h-[142px] ${raised}`} />
        </VScroll>
      </div>
      <HScroll off />
    </div>
  );
}

function ValueGrid() {
  const td = "h-5 overflow-hidden border-r border-b border-[#d8d8d8] p-0 pl-px whitespace-nowrap";
  const sel = "border-b-2 border-b-[#0a246a] shadow-[inset_0_1px_0_#0a246a]";
  return (
    <div className="flex h-[311px] flex-col border border-black">
      <div className="flex min-h-0 flex-1">
        <div className="min-w-0 flex-1 overflow-hidden">
          <table className="w-full table-fixed border-separate border-spacing-0">
            <colgroup>
              <col />
              <col className="w-[51px]" />
              <col className="w-[51px]" />
              <col className="w-[65px]" />
            </colgroup>
            <thead>
              <tr>
                <Th>Значение характеристики</Th>
                <Th>Кол-во</Th>
                <Th>Код</Th>
                <Th className="border-r-0" />
              </tr>
            </thead>
            <tbody>
              {Array.from({ length: 14 }, (_, i) => {
                const v = values[i];
                const s = i === 0 ? sel : "";
                return (
                  <tr key={i}>
                    <td className={`${td} ${s} ${i === 0 ? "border-l border-l-[#0a246a] bg-[#0093dd] pl-0 text-white" : ""}`}>{v?.[0]}</td>
                    <td className={`${td} ${s}`}>{v?.[1]}</td>
                    <td className={`${td} ${s} ${i === 0 ? "" : "text-[#5c5c5c]"}`}>{v && "53337"}</td>
                    <td className={`h-5 border-b border-[#d8d8d8] p-0 ${s} ${i === 0 ? "border-r-2 border-r-[#0a246a]" : ""}`} />
                  </tr>
                );
              })}
            </tbody>
          </table>
        </div>
        <VScroll off />
      </div>
      <HScroll off />
    </div>
  );
}

function DialogAction({ icon, lines, className = "" }: { icon: ReactNode; lines: string[]; className?: string }) {
  return (
    <button className={`flex shrink-0 items-center leading-[13px] ${className}`}>
      {icon}
      <span className="flex-1 text-center whitespace-nowrap">
        {lines.map((l) => (
          <span key={l} className="block">
            {l}
          </span>
        ))}
      </span>
    </button>
  );
}

function Dialog() {
  const tb = `flex h-[14px] w-4 items-center justify-center ${raised}`;
  return (
    <section className="absolute top-[320px] left-[296px] flex w-[900px] flex-col border border-t-[#d4d0c8] border-l-[#d4d0c8] border-r-[#404040] border-b-[#404040] bg-white p-[2px] shadow-[inset_1px_1px_0_#fff,inset_-1px_-1px_0_#808080,inset_0_0_0_4px_#d4d0c8]">
      <div className="mx-px mt-px flex h-[19px] items-center bg-[#0a246a] px-[2px] text-white">
        <CC />
        <h1 className="ml-px flex-1 text-[11px] font-bold">Корректировка значений характеристик товаров</h1>
        <button aria-label="Свернуть" className={tb}>
          <svg width="8" height="8">
            <path d="M1 7h6" stroke="#808080" strokeWidth="2" />
          </svg>
        </button>
        <button aria-label="Развернуть" className={tb}>
          <svg width="9" height="9">
            <path d="M.5 1v7.500h8V1" fill="none" stroke="#000" />
            <path d="M0 1h9" stroke="#000" strokeWidth="2" />
          </svg>
        </button>
        <button aria-label="Закрыть окно" className={`ml-[2px] ${tb}`}>
          <svg width="8" height="8">
            <path d="M.5.5l7 7M7.500.5l-7 7" stroke="#000" strokeWidth="1.700" />
          </svg>
        </button>
      </div>
      <div className="mx-[2px] mb-[2px] flex flex-col px-[6px] pb-[15px]">
        <p className="mt-[9px] flex h-4 items-center gap-1 pl-px">
          <b className="underline">Выбранная категория:</b>
          <i className="text-[#444]">Смартфоны (код: 549)</i>
        </p>
        <div className="flex items-end gap-6">
          <div className="w-[353px]">
            <div className="flex h-6 items-center pl-[7px]">
              <b className="pt-[9px]">Список характеристик:</b>
              <span className="ml-10">Л</span>
              <button className="mr-[35px] ml-auto flex items-center gap-[2px]">
                <RefreshSmall />
                Обновить
              </button>
            </div>
            <FeatureGrid />
          </div>
          <div className="w-[486px]">
            <div className="flex h-[21px] items-center pl-1">
              <b className="pt-2 whitespace-nowrap">Список значений характеристик для товаров:</b>
              <button className="ml-auto flex items-center gap-[6px] whitespace-nowrap">
                <span className="size-[6px] rounded-full bg-[#55ba5e]" />
                Добавить фото
              </button>
              <button className="mr-2 ml-[22px] flex items-center gap-[2px]">
                <RefreshSmall />
                Обновить
              </button>
            </div>
            <ValueGrid />
          </div>
        </div>
        <div className="flex h-[18px] items-center gap-6">
          <div className="flex w-[353px] items-center gap-[3px] pl-[5px]">
            <Check id="onlyFilter" checked />
            <label htmlFor="onlyFilter">Отобразить только те, которые участвуют в фильтрации</label>
          </div>
          <div className="flex items-center gap-[3px]">
            <Check id="synonyms" checked />
            <label htmlFor="synonyms">Отображать значения от синонимов характеристик</label>
          </div>
        </div>
        <div className="mt-[6px] flex h-8 items-center pl-[13px]">
          <DialogAction
            className="w-[160px]"
            lines={["Синонимы характеристики"]}
            icon={
              <svg width="16" height="14" viewBox="0 0 16 14">
                <path d="M8 4v5M2.500 9V6.500h11V9" fill="none" stroke="#8a8f96" />
                <rect x="6" y="0" width="4" height="4" fill="#5b92dc" />
                <path d="M.5 9.500h4v4h-4zM6 9.500h4v4H6zM11.500 9.500h4v4h-4z" fill="#5bb54c" stroke="#2f8a2d" strokeWidth=".7" />
              </svg>
            }
          />
          <DialogAction
            className="ml-[27px] w-[149px]"
            lines={["Удалить характеристики", "без значений (пустые)"]}
            icon={
              <svg width="16" height="15" viewBox="0 0 16 15">
                <path d="M1 3.500v6c0 4.500 10 5 10 1v-7z" fill="#8f8f8f" />
                <path d="M3 4v9l3 .5V5z" fill="#d5d5d5" />
                <ellipse cx="6" cy="3.500" rx="5" ry="2.700" fill="#e4e4e4" stroke="#999" strokeWidth=".6" />
                <path d="M8 8.500l6 5.500M14 8.500L8 14" stroke="#d83a26" strokeWidth="2.500" />
              </svg>
            }
          />
          <DialogAction className="ml-[30px] w-[172px]" lines={["Список описаний с данным", "значением характеристики"]} icon={<ListIcon />} />
          <DialogAction className="ml-[15px] w-[125px]" lines={["Справочник", "автозамены"]} icon={<ListIcon />} />
          <DialogAction
            className="ml-[29px] w-[64px]"
            lines={["Закрыть"]}
            icon={
              <svg width="16" height="15" viewBox="0 0 16 15">
                <path d="M7 .5l8 7.500-7 6.500L1 7z" fill="#fff" stroke="#9b8c80" />
                <path d="M8 14.500l7-6.500" stroke="#b5743b" strokeWidth="2" />
                <path d="M8 4.500V9H5" fill="none" stroke="#45a35c" />
              </svg>
            }
          />
        </div>
      </div>
    </section>
  );
}

/* ---------- bottom bars ---------- */

function StatusBar() {
  const c = "h-4 border-l border-[#8f959d] flex items-center justify-center";
  return (
    <footer className="flex h-[21px] shrink-0 items-center justify-end border-b border-white bg-linear-to-b from-[#e4e7ea] to-[#b9bfc7] text-[#3a3f48]">
      <div className={`w-[60px] ${c}`}>СТУС: 125</div>
      <div className={`w-12 ${c}`}>СОБЗ: 0</div>
      <div className={`w-[10px] ${c}`} />
      <div className={`w-[10px] ${c}`} />
      <div className={`w-3 ${c}`} />
      <div className={`w-2 ${c}`} />
      <div className={`w-[30px] ${c}`} />
      <div className={`w-[30px] ${c}`}>NUM</div>
      <div className={`w-[35px] ${c}`} />
      <div className={`w-[10px] ${c}`} />
    </footer>
  );
}

function TaskButton({ children, label, kind = "up" }: { children: ReactNode; label: string; kind?: "up" | "flat" | "down" }) {
  const style =
    kind === "up"
      ? raised
      : kind === "down"
        ? "border border-t-[#404040] border-l-[#404040] border-r-white border-b-white bg-white shadow-[inset_1px_1px_0_#808080]"
        : "";
  return (
    <button aria-label={label} className={`flex h-[38px] w-12 items-center justify-center ${style}`}>
      {children}
    </button>
  );
}

function Tray() {
  return (
    <div className="flex h-[38px] items-center border border-t-[#808080] border-l-[#808080] border-r-white border-b-white pr-px pl-[6px]">
      <div className="flex gap-2">
        <svg width="16" height="16">
          <rect width="16" height="16" fill="#0d6fd4" />
          <circle cx="8" cy="8" r="7" fill="#fff" />
          <path d="M2 8l4-3v2h4V5l4 3-4 3V9H6v2z" fill="#0d6fd4" />
        </svg>
        <svg width="16" height="16">
          <circle cx="5" cy="5" r="5" fill="#12a5ea" />
          <circle cx="11" cy="11" r="5" fill="#12a5ea" />
          <circle cx="8" cy="8" r="7" fill="#12a5ea" />
          <path d="M11 5.500C9.500 4 5.500 4 5.500 6s5.500 1.500 5.500 4-4.500 2.500-6 .5" fill="none" stroke="#fff" strokeWidth="1.800" />
        </svg>
        <svg width="16" height="16">
          <path d="M0 5h4l5-4v14l-5-4H0z" fill="#c9432e" stroke="#6f1f14" />
          <path d="M11 5c1 2 1 4 0 6M13.500 3c2 3 2 7 0 10" stroke="#8a5a50" fill="none" />
        </svg>
        <svg width="16" height="16">
          <path d="M3 0h5v4H3zM1 4h9v6l-3 3v2H4v-2l-3-3z" fill="#6d6d6d" />
          <circle cx="11" cy="10.500" r="5" fill="#25a032" />
          <path d="M8.500 10.500l2 2 3-4" stroke="#fff" strokeWidth="1.600" fill="none" />
        </svg>
        <svg width="16" height="16">
          <circle cx="8" cy="8" r="7.500" fill="#f9a51b" />
          <path d="M8 3.500l4 4H9.500V12h-3V7.500H4z" fill="#fff" />
        </svg>
        <svg width="16" height="16" fill="#f4f4f4" stroke="#707070">
          <rect x="5.500" y="3.500" width="10" height="9" />
          <rect x="7.500" y="5.500" width="6" height="5" fill="#d4d0c8" />
          <path d="M7 14.500h7M.5 1.500h5v4h-5zM3 6v8h4" />
        </svg>
        <svg width="16" height="16" fill="#fff" stroke="#7a7a7a">
          <path d="M.5 5.500h3l4-4v13l-4-4h-3z" />
          <path d="M10 5c1 2 1 4 0 6M12.500 3c2.500 3 2.500 7 0 10" fill="none" />
        </svg>
        <svg width="16" height="16" fill="#fff" stroke="#7a7a7a">
          <path d="M1.500 1v15" />
          <path d="M2 2c3-1 4 1 7 1v1c2 0 3 1 6 0-1 2-2 5-5 5s-5-1-8 0z" />
        </svg>
      </div>
      <div className="ml-2 flex w-[66px] flex-col items-center leading-4">
        <span>10:02</span>
        <span>19.12.2018</span>
      </div>
      <svg width="16" height="14" className="ml-[2px]">
        <rect x=".5" y="1.500" width="15" height="10" fill="#3472d6" stroke="#2a4c96" />
        <path d="M1 2h14L1 9z" fill="#7eb0f2" />
        <path d="M2 9h3v3H2z" fill="#e9c63a" />
      </svg>
    </div>
  );
}

function Taskbar() {
  return (
    <div className="flex h-[43px] shrink-0 items-center border-t border-[#d4d0c8] bg-[#d4d0c8] px-[2px]">
      <button className={`flex h-[38px] w-[51px] items-center pl-px font-bold ${raised}`}>
        <svg width="16" height="15" viewBox="0 0 16 15" className="shrink-0">
          <path d="M2 2c2-1.500 4-1.500 6-.5L7 7C5 6 3 6 1 7z" fill="#e8512a" />
          <path d="M9 2c2 1 4 1 6 0l-1 5.500c-2 1-4 1-6 0z" fill="#7fba2c" />
          <path d="M1 8c2-1 4-1 6 0l-1 5.500c-2-1-4-1-6 0z" fill="#3f86dd" />
          <path d="M8 8.500c2 1 4 1 6 0L13 14c-2 1-4 1-6 0z" fill="#f7bf26" />
        </svg>
        Пуск
      </button>
      <div className="ml-[9px] flex gap-[2px]">
        <TaskButton label="PLi E-Trade">
          <svg width="32" height="32" viewBox="0 0 32 32">
            <rect width="32" height="32" fill="#35a615" />
            <path d="M0 0h32v12L0 26z" fill="#248f0e" opacity=".5" />
            <text x="6" y="19" fontSize="15" fill="#eaffdf" fontFamily="Liberation Sans">
              PLi
            </text>
            <text x="11" y="29" fontSize="5" fill="#0d3b05" fontFamily="Liberation Sans">
              E-Trade
            </text>
          </svg>
        </TaskButton>
        <TaskButton label="Проводник" kind="flat">
          <svg width="34" height="32" viewBox="0 0 34 32">
            <path d="M1 28V4l2-2h6l2 2 2-1h7l2 2h9v23z" fill="#f3d77a" stroke="#cfa640" />
            <path d="M3 4h8v3H3z" fill="#fff" />
            <path d="M4 4h4v2H4z" fill="#3da63b" />
            <path d="M12 6h5v2h-5z" fill="#d4482b" />
            <path d="M21 8h6v2h-6z" fill="#3c8edb" />
            <path d="M1 12h31v16H1z" fill="#fbe9a4" stroke="#d9b553" />
            <path d="M5 31V21c0-2 2-3 4-3h16c2 0 4 1 4 3v10h-5v-7H10v7z" fill="#a9ddf5" stroke="#5ba9d2" />
          </svg>
        </TaskButton>
        <TaskButton label="Chrome">
          <svg width="30" height="30" viewBox="0 0 30 30">
            <circle cx="15" cy="15" r="15" fill="#fbc93d" />
            <path d="M15 15L2 7.500A15 15 0 0 1 28 7.500H15z" fill="#db4437" />
            <path d="M2 7.500A15 15 0 0 0 14 30l6.500-12L15 15l-6.500 3.500z" fill="#1ea362" />
            <circle cx="15" cy="15" r="7" fill="#fff" />
            <circle cx="15" cy="15" r="5.500" fill="#4c8bf5" />
          </svg>
        </TaskButton>
        <TaskButton label="CC E-Trade" kind="down">
          <CC size={32} label />
        </TaskButton>
        <TaskButton label="Paint">
          <svg width="34" height="32" viewBox="0 0 34 32">
            <path d="M2 22C0 12 8 5 18 6c9 0 13 7 11 13-2 7-9 10-15 10-4 0-3-5-6-4-3 2-5 0-6-3z" fill="#b7def5" stroke="#5f9fc9" />
            <circle cx="7" cy="17" r="2.800" fill="#e23b2c" />
            <circle cx="12" cy="11" r="2.800" fill="#56b437" />
            <circle cx="19" cy="10" r="2.800" fill="#f6b11d" />
            <circle cx="15" cy="19" r="2.300" fill="#eef6fb" stroke="#5f9fc9" />
            <path d="M17 31c0-3 2-6 4-10l4-12 3 1-5 12c-2 4-3 7-6 9z" fill="#ef8a2c" />
            <path d="M24 9c0-4 1-5 3-7l6 1-1 3c-2 2-2 4-4 4z" fill="#b98a58" />
          </svg>
        </TaskButton>
      </div>
      <span className="mr-1 ml-auto">EN</span>
      <div className="mr-[3px] h-6 w-[3px] border-r border-l border-r-white border-l-[#808080]" />
      <Tray />
    </div>
  );
}

export default function App() {
  return (
    <div className="relative flex h-screen w-full flex-col overflow-hidden bg-[#d4d0c8] text-[11px] leading-[14px] text-black [font-family:'DejaVu_Sans_Condensed','DejaVu_Sans',sans-serif]">
      <TopBars />
      <Ribbon />
      <div className="h-[3px] shrink-0 bg-[#cfd3d8]" />
      <div className="flex min-h-0 flex-1">
        <NavPanel />
        <MainDocument />
      </div>
      <StatusBar />
      <Taskbar />
      <CategoryWindow />
      <Dialog />
    </div>
  );
}
